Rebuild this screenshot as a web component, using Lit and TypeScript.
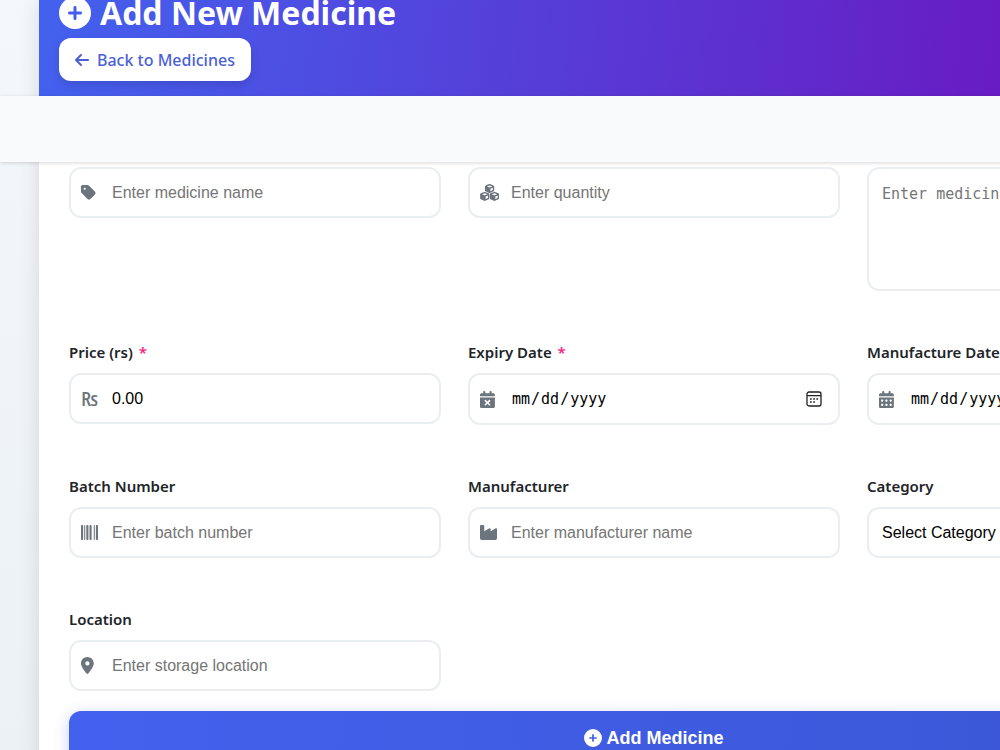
import { LitElement, html, svg, css, nothing } from "lit";
import { customElement } from "lit/decorators.js";

type IconName = "plus" | "arrow" | "tag" | "cubes" | "expiry" | "made" | "barcode" | "factory" | "pin";

const CAL =
  "M128 0c17.7 0 32 14.3 32 32V64H288V32c0-17.7 14.3-32 32-32s32 14.3 32 32V64h48c26.5 0 48 21.5 48 48v48H0V112C0 85.5 21.5 64 48 64H96V32c0-17.7 14.3-32 32-32zM0 192H448V464c0 26.5-21.5 48-48 48H48c-26.5 0-48-21.5-48-48V192z";

const cell = (x: number, y: number) =>
  `M${x} ${y + 16}v32c0 8.8 7.2 16 16 16h32c8.8 0 16-7.2 16-16v-32c0-8.8-7.2-16-16-16h-32c-8.8 0-16 7.2-16 16z`;

/* One box of the stack: rounded hexagon outline with its lid and right face cut out. */
const cube = (x: number, y: number) =>
  `M${x - 14} ${y + 3}Q${x} ${y - 3} ${x + 14} ${y + 3}L${x + 118} ${y + 44}Q${x + 138} ${y + 52} ${x + 138} ${y + 74}V${y + 196}Q${x + 138} ${y + 212} ${x + 122} ${y + 220}L${x + 14} ${y + 270}Q${x} ${y + 276} ${x - 14} ${y + 270}L${x - 122} ${y + 220}Q${x - 138} ${y + 212} ${x - 138} ${y + 196}V${y + 74}Q${x - 138} ${y + 52} ${x - 118} ${y + 44}z` +
  `M${x} ${y + 42}L${x - 80} ${y + 73}L${x} ${y + 106}L${x + 80} ${y + 73}z` +
  `M${x + 26} ${y + 216}L${x + 98} ${y + 182}V${y + 114}L${x + 26} ${y + 144}z`;

const ICONS: Record<IconName, [number, string]> = {
  plus: [512, "M256 512A256 256 0 1 0 256 0a256 256 0 1 0 0 512zM232 344V280H168c-13.3 0-24-10.7-24-24s10.7-24 24-24h64V168c0-13.3 10.7-24 24-24s24 10.7 24 24v64h64c13.3 0 24 10.7 24 24s-10.7 24-24 24H280v64c0 13.3-10.7 24-24 24s-24-10.7-24-24z"],
  arrow: [448, "M9.4 233.4c-12.5 12.5-12.5 32.8 0 45.3l160 160c12.5 12.5 32.8 12.5 45.3 0s12.5-32.8 0-45.3L109.2 288 416 288c17.7 0 32-14.3 32-32s-14.3-32-32-32l-306.7 0L214.6 118.6c12.5-12.5 12.5-32.8 0-45.3s-32.8-12.5-45.3 0l-160 160z"],
  tag: [448, "M0 80V229.5c0 17 6.7 33.3 18.7 45.3l176 176c25 25 65.5 25 90.5 0L418.7 317.3c25-25 25-65.5 0-90.5l-176-176c-12-12-28.3-18.7-45.3-18.7H48C21.5 32 0 53.5 0 80zm112 32a32 32 0 1 1 0 64 32 32 0 1 1 0-64z"],
  cubes: [576, ""],
  expiry: [448, CAL + "M305 305c9.4-9.4 9.4-24.6 0-33.9s-24.6-9.4-33.9 0l-47 47-47-47c-9.4-9.4-24.6-9.4-33.9 0s-9.4 24.6 0 33.9l47 47-47 47c-9.4 9.4-9.4 24.6 0 33.9s24.6 9.4 33.9 0l47-47 47 47c9.4 9.4 24.6 9.4 33.9 0s9.4-24.6 0-33.9l-47-47 47-47z"],
  made: [448, CAL + [64, 192, 320].map((x) => cell(x, 256) + cell(x, 384)).join("")],
  barcode: [512, "M24 32C10.7 32 0 42.7 0 56V456c0 13.3 10.7 24 24 24H40c13.3 0 24-10.7 24-24V56c0-13.3-10.7-24-24-24H24zm88 0c-8.8 0-16 7.2-16 16V464c0 8.8 7.2 16 16 16s16-7.2 16-16V48c0-8.8-7.2-16-16-16zm72 0c-13.3 0-24 10.7-24 24V456c0 13.3 10.7 24 24 24h16c13.3 0 24-10.7 24-24V56c0-13.3-10.7-24-24-24H184zm96 0c-13.3 0-24 10.7-24 24V456c0 13.3 10.7 24 24 24h16c13.3 0 24-10.7 24-24V56c0-13.3-10.7-24-24-24H280zM448 56V456c0 13.3 10.7 24 24 24h16c13.3 0 24-10.7 24-24V56c0-13.3-10.7-24-24-24H472c-13.3 0-24 10.7-24 24zm-64-8V464c0 8.8 7.2 16 16 16s16-7.2 16-16V48c0-8.8-7.2-16-16-16s-16 7.2-16 16z"],
  factory: [512, "M32 32C14.3 32 0 46.3 0 64V432c0 26.5 21.5 48 48 48H464c26.5 0 48-21.5 48-48V152.2c0-18.2-19.4-29.7-35.4-21.1L320 215.4V152.2c0-18.2-19.4-29.7-35.4-21.1L128 215.4V64c0-17.7-14.3-32-32-32H32z"],
  pin: [384, "M215.7 499.2C267 435 384 279.4 384 192C384 86 298 0 192 0S0 86 0 192c0 87.4 117 243 168.3 307.2c12.3 15.3 35.1 15.3 47.4 0zM192 128a64 64 0 1 1 0 128 64 64 0 1 1 0-128z"],
};

const icon = (name: IconName) => {
  const [w, d] = ICONS[name];
  const paths = name === "cubes" ? [cube(288, 0), cube(142, 236), cube(434, 236)] : [d];
  return html`<svg class="icon" viewBox="0 0 ${w} 512" aria-hidden="true">
    ${paths.map((p) => svg`<path fill-rule="evenodd" d=${p}></path>`)}
  </svg>`;
};

interface Field {
  id: string;
  label: string;
  icon: IconName | "rupee";
  type?: string;
  placeholder?: string;
  value?: string;
  required?: boolean;
}

@customElement("app-root")
export class AppRoot extends LitElement {
  static styles = css`
    :host {
      display: block;
      min-height: 100vh;
      overflow: hidden;
      background: linear-gradient(#f4f7fb, #ebf1f5);
      color: #212529;
      font-family: "Segoe UI", "Noto Sans", sans-serif;
      font-size: 16px;
    }
    * { box-sizing: border-box; }
    .page {
      height: 100vh;
      overflow: hidden;
    }
    .icon { display: block; height: 1em; width: auto; fill: currentColor; flex: none; overflow: visible; }
    .sheet {
      width: max-content;
      min-width: calc(100% - 78px);
      margin: 0 39px;
      box-shadow: 0 0 20px rgba(0, 0, 0, 0.12);
    }
    .hero {
      height: 96px;
      padding: 0 20px 15px;
      display: flex;
      flex-direction: column;
      justify-content: flex-end;
      align-items: flex-start;
      overflow: hidden;
      background: linear-gradient(95deg, #4361ee, #7209b7);
      color: #fff;
    }
    .title {
      flex: none;
      margin: 0;
      display: flex;
      align-items: center;
      gap: 9px;
      font-size: 32px;
      line-height: 50px;
      font-weight: 700;
    }
    .back {
      flex: none;
      display: flex;
      align-items: center;
      gap: 8px;
      height: 43px;
      padding: 0 16px;
      border-radius: 12px;
      background: #fff;
      color: #4a60d6;
      font-weight: 500;
      text-decoration: none;
      box-shadow: 0 4px 8px rgba(0, 0, 0, 0.12);
    }
    .bar {
      position: relative;
      z-index: 1;
      height: 66px;
      margin: 0 -39px;
      background: #f9fafc;
      box-shadow: 0 1px 4px rgba(0, 0, 0, 0.16);
    }
    .form {
      padding: 5px 30px 40px;
      background: #fff;
    }
    .grid {
      display: grid;
      grid-template-columns: repeat(3, minmax(372px, 1fr));
      gap: 49px 27px;
      align-items: start;
    }
    .label {
      display: block;
      margin-bottom: 9px;
      font-size: 15px;
      line-height: 24px;
      font-weight: 600;
    }
    .star { color: #f72585; margin-left: 2px; }
    .box {
      display: flex;
      align-items: center;
      min-height: 51px;
      border: 2px solid #ebeef0;
      border-radius: 12px;
      background: #fff;
      overflow: hidden;
    }
    .box.date { min-height: 52px; }
    .slot {
      width: 41px;
      padding-left: 10px;
      flex: none;
      color: #6c757d;
      font-size: 17px;
      line-height: 20px;
    }
    .rupee { display: block; font: 500 20px/20px "Noto Sans", sans-serif; }
    .input,
    .area,
    .select {
      flex: 1;
      min-width: 0;
      border: 0;
      outline: 0;
      background: none;
      padding: 0 13px 0 0;
      color: #000;
      font: 16px/20px "Liberation Sans", Arial, sans-serif;
    }
    .input::placeholder,
    .area::placeholder { color: #757575; }
    .input.date,
    .area { font: 15px/20px "DejaVu Sans Mono", monospace; }
    .input.date { padding-right: 16px; }
    .input.date::-webkit-calendar-picker-indicator {
      width: 16px;
      height: 16px;
      padding: 0;
      background: url("data:image/svg+xml,%3Csvg xmlns='http://www.w3.org/2000/svg' viewBox='0 0 16 16'%3E%3Crect x='1' y='1' width='14' height='14' rx='2' fill='none' stroke='%23222' stroke-width='1.3'/%3E%3Cpath d='M1 4.6h14' stroke='%23222' stroke-width='1.2'/%3E%3Cpath d='M4 8h1.7M7.2 8h1.7M10.4 8h1.7M4 11h1.7M7.2 11h1.7' stroke='%23222' stroke-width='1.7'/%3E%3C/svg%3E") center / 16px no-repeat;
    }
    .area { padding: 15px 13px; height: 120px; resize: none; }
    .select { appearance: none; padding: 0 13px; }
    .submit {
      display: flex;
      align-items: center;
      justify-content: center;
      gap: 4px;
      width: 100%;
      height: 54px;
      margin-top: 20px;
      border: 0;
      border-radius: 12px;
      background: linear-gradient(90deg, #4361ee, #3a56d4);
      color: #fff;
      font: 700 18px/24px "Liberation Sans", Arial, sans-serif;
      box-shadow: 0 4px 15px rgba(67, 97, 238, 0.3);
    }
  `;

  private label(id: string, text: string, required = false) {
    return html`<label class="label" for=${id}>${text}${required ? html` <span class="star">*</span>` : nothing}</label>`;
  }

  private field(f: Field, labelled = true) {
    const kind = f.type === "date" ? "date" : "";
    return html`<div class="field">
      ${labelled ? this.label(f.id, f.label, f.required) : nothing}
      <div class="box ${kind}">
        <span class="slot">${f.icon === "rupee" ? html`<span class="rupee">₨</span>` : icon(f.icon)}</span>
        <input
          class="input ${kind}"
          id=${f.id}
          type=${f.type ?? "text"}
          aria-label=${labelled ? nothing : f.label}
          placeholder=${f.placeholder ?? nothing}
          .value=${f.value ?? ""}
        />
      </div>
    </div>`;
  }

  render() {
    return html`<div class="page">
      <main class="sheet">
        <header class="hero">
          <h1 class="title">${icon("plus")}Add New Medicine</h1>
          <a class="back" href="#">${icon("arrow")}Back to Medicines</a>
        </header>
        <div class="bar"></div>
        <form class="form">
          <div class="grid">
            ${this.field({ id: "name", label: "Medicine name", icon: "tag", placeholder: "Enter medicine name" }, false)}
            ${this.field({ id: "quantity", label: "Quantity", icon: "cubes", placeholder: "Enter quantity" }, false)}
            <div class="box">
              <textarea class="area" id="description" aria-label="Description" placeholder="Enter medicine description"></textarea>
            </div>
            ${this.field({ id: "price", label: "Price (rs)", icon: "rupee", value: "0.00", required: true })}
            ${this.field({ id: "expiry", label: "Expiry Date", icon: "expiry", type: "date", required: true })}
            ${this.field({ id: "made", label: "Manufacture Date", icon: "made", type: "date" })}
            ${this.field({ id: "batch", label: "Batch Number", icon: "barcode", placeholder: "Enter batch number" })}
            ${this.field({ id: "maker", label: "Manufacturer", icon: "factory", placeholder: "Enter manufacturer name" })}
            <div class="field">
              ${this.label("category", "Category")}
              <div class="box">
                <select class="select" id="category"><option>Select Category</option></select>
              </div>
            </div>
            ${this.field({ id: "location", label: "Location", icon: "pin", placeholder: "Enter storage location" })}
          </div>
          <button class="submit" type="button">${icon("plus")}Add Medicine</button>
        </form>
      </main>
    </div>`;
  }
}
